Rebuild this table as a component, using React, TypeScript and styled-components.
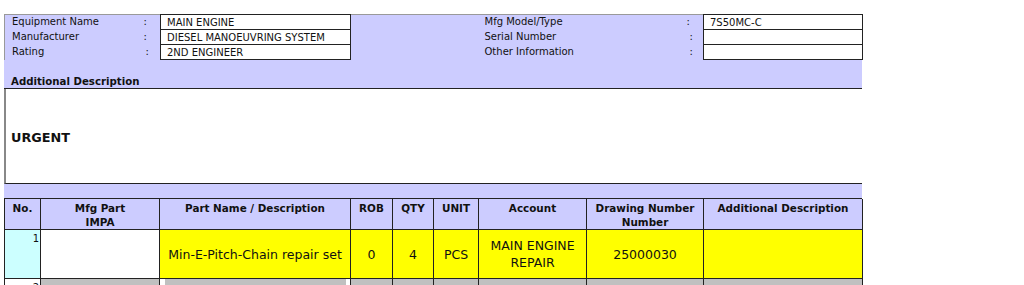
import React from "react";
import styled, { createGlobalStyle } from "styled-components";

const Global = createGlobalStyle`
  html, body { margin: 0; padding: 0; background: #fff; }
  body { font-family: "DejaVu Sans", Verdana, sans-serif; color: #111; }
`;

const LAV = "#ccccff";
const LINE = "#222";

const Page = styled.div`
  padding: 14px 0 0 4px;
  width: 858px;
`;

const InfoTable = styled.table`
  width: 858px;
  border-collapse: collapse;
  table-layout: fixed;
  background: ${LAV};
  border-top: 1px solid #999;
  border-left: 1px solid #999;
  font-size: 10px;
`;

const InfoRow = styled.tr`
  height: 15px;
`;

const Label = styled.td<{ $pad?: number }>`
  padding: 0 0 0 ${(p) => p.$pad ?? 7}px;
  white-space: nowrap;
  line-height: 14px;
  vertical-align: middle;
`;

const Colon = styled.td<{ $pad?: number }>`
  padding: 0 0 0 ${(p) => p.$pad ?? 8}px;
  line-height: 14px;
`;

const Value = styled.td`
  background: #fff;
  border: 1px solid ${LINE};
  padding: 1px 0 0 6px;
  line-height: 13px;
  white-space: nowrap;
`;

const Blank = styled.td`
  padding: 0;
`;

const DescHead = styled.div`
  background: ${LAV};
  height: 28px;
  border-bottom: 1px solid ${LINE};
  display: flex;
  align-items: flex-end;
  padding: 0 0 0 7px;
  font-weight: bold;
  font-size: 10.2px;
  line-height: 13px;
`;

const DescBody = styled.div`
  height: 95px;
  border-left: 2px solid #888;
  border-bottom: 1px solid ${LINE};
  display: flex;
  align-items: center;
  padding: 2px 0 0 5px;
  box-sizing: border-box;
  font-weight: bold;
  font-size: 12.8px;
`;

const Strip = styled.div`
  background: ${LAV};
  height: 14px;
  border-bottom: 1px solid ${LINE};
`;

const Parts = styled.table`
  width: 858px;
  border-collapse: collapse;
  table-layout: fixed;
  font-size: 12.5px;
`;

const Head = styled.th`
  background: ${LAV};
  border: 1px solid ${LINE};
  border-top: none;
  height: 27px;
  padding: 2px 2px 0;
  vertical-align: top;
  font-size: 10.4px;
  line-height: 14px;
  font-weight: bold;
`;

const Row = styled.tr<{ $h: number }>`
  height: ${(p) => p.$h}px;
`;

const NoCell = styled.td<{ $bg: string }>`
  background: ${(p) => p.$bg};
  border: 1px solid ${LINE};
  vertical-align: top;
  text-align: right;
  padding: 3px 1px 0 0;
  font-size: 10px;
  line-height: 12px;
`;

const Cell = styled.td<{ $bg: string }>`
  background: ${(p) => p.$bg};
  border: 1px solid ${LINE};
  text-align: center;
  vertical-align: middle;
  padding: 0 3px;
  line-height: 17px;
`;

const InsetCell = styled.td`
  border: 1px solid ${LINE};
  padding: 0 4px 0 5px;
  vertical-align: top;
`;

const InsetBox = styled.div`
  background: #c0c0c0;
  height: 20px;
`;

const infoCols = [131, 25, 190, 128, 202, 23, 159];
const partCols = [36, 119, 191, 42, 41, 45, 108, 117, 159];

const info = [
  ["Equipment Name", 8, "MAIN ENGINE", "Mfg Model/Type", 6, "7S50MC-C"],
  ["Manufacturer", 8, "DIESEL MANOEUVRING SYSTEM", "Serial Number", 9, ""],
  ["Rating", 10, "2ND ENGINEER", "Other Information", 9, ""],
] as const;

const heads: React.ReactNode[] = [
  "No.",
  <>
    Mfg Part
    <br />
    IMPA
  </>,
  "Part Name / Description",
  "ROB",
  "QTY",
  "UNIT",
  "Account",
  <>
    Drawing Number
    <br />
    Number
  </>,
  "Additional Description",
];

export default function App() {
  const Y = "#ffff00";
  const G = "#c0c0c0";
  return (
    <Page>
      <Global />
      <InfoTable>
        <colgroup>
          {infoCols.map((w, i) => (
            <col key={i} style={{ width: w }} />
          ))}
        </colgroup>
        <tbody>
          {info.map(([l, c, v, rl, rc, rv], i) => (
            <InfoRow key={i}>
              <Label>{l}</Label>
              <Colon $pad={c}>:</Colon>
              <Value>{v}</Value>
              <Blank />
              <Label $pad={6}>{rl}</Label>
              <Colon $pad={rc}>:</Colon>
              <Value>{rv}</Value>
            </InfoRow>
          ))}
        </tbody>
      </InfoTable>
      <DescHead>Additional Description</DescHead>
      <DescBody>URGENT</DescBody>
      <Strip />
      <Parts>
        <colgroup>
          {partCols.map((w, i) => (
            <col key={i} style={{ width: w }} />
          ))}
        </colgroup>
        <thead>
          <tr>
            {heads.map((h, i) => (
              <Head key={i}>{h}</Head>
            ))}
          </tr>
        </thead>
        <tbody>
          <Row $h={49}>
            <NoCell $bg="#ccffff">1</NoCell>
            <Cell $bg="#fff" />
            <Cell $bg={Y}>Min-E-Pitch-Chain repair set</Cell>
            <Cell $bg={Y}>0</Cell>
            <Cell $bg={Y}>4</Cell>
            <Cell $bg={Y}>PCS</Cell>
            <Cell $bg={Y}>
              MAIN ENGINE
              <br />
              REPAIR
            </Cell>
            <Cell $bg={Y}>25000030</Cell>
            <Cell $bg={Y} />
          </Row>
          <Row $h={30}>
            <NoCell $bg="#fff">2</NoCell>
            <Cell $bg={G} />
            <InsetCell>
              <InsetBox />
            </InsetCell>
            <Cell $bg={G} />
            <Cell $bg={G} />
            <Cell $bg={G} />
            <Cell $bg={G} />
            <Cell $bg={G} />
            <Cell $bg={G} />
          </Row>
        </tbody>
      </Parts>
    </Page>
  );
}
